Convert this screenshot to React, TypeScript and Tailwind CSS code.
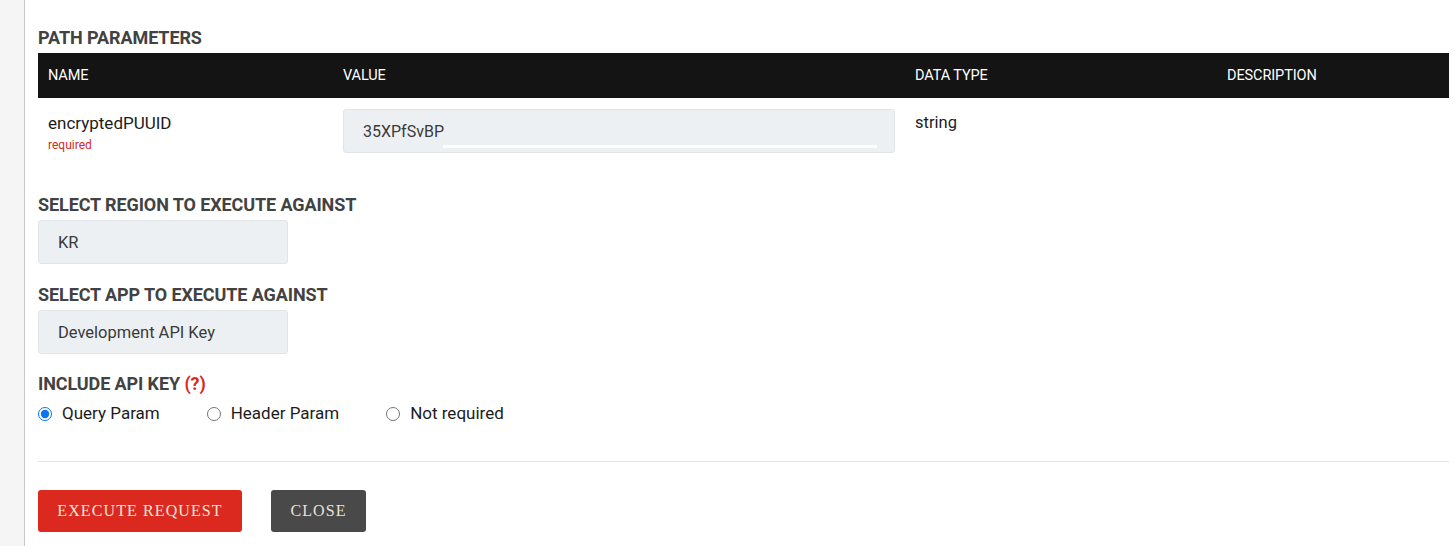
import { useState } from 'react';

const label = "text-[18px] leading-5 font-bold text-[#424242] uppercase tracking-[-0.1px] [font-family:'Roboto',sans-serif]";

function SelectBox({ value }: { value: string }) {
  return (
    <div className="w-[250px] h-[44px] bg-[#edf0f2] border border-[#e2e5e8] rounded-[3px] flex items-center pl-[19px] pt-[3px] text-[16.5px] text-[#3a3a3a]">
      {value}
    </div>
  );
}

export default function App() {
  const [keyMode, setKeyMode] = useState('query');

  const options = [
    { id: 'query', text: 'Query Param' },
    { id: 'header', text: 'Header Param' },
    { id: 'none', text: 'Not required' },
  ];

  return (
    <div className="flex w-[1456px] h-[546px] bg-white overflow-hidden [font-family:'Roboto',sans-serif]">
      {/* side strip */}
      <div className="w-[25px] shrink-0 bg-[#f5f5f5] border-r border-[#c8c8c8]" />

      <div className="w-[1411px] ml-[13px] pt-[28px]">
        <h3 className={label}>Path Parameters</h3>

        {/* parameters table */}
        <div className="mt-[5px]">
          <div className="grid grid-cols-[295px_572px_312px_232px] h-[45px] items-center bg-[#141414] text-white text-[14.5px] tracking-[-0.1px]">
            <div className="pl-[10px]">NAME</div>
            <div className="pl-[10px]">VALUE</div>
            <div className="pl-[10px]">DATA TYPE</div>
            <div className="pl-[10px]">DESCRIPTION</div>
          </div>
          <div className="grid grid-cols-[295px_572px_312px_232px] pt-[11px] h-[67px]">
            <div className="pl-[10px] pt-[4px]">
              <div className="text-[17px] leading-5 text-[#1c1c1c]">encryptedPUUID</div>
              <div className="text-[12px] leading-4 mt-[4px] text-[#d9281c]">required</div>
            </div>
            <div className="px-[10px]">
              <div className="relative h-[44px] bg-[#edf0f2] border border-[#e2e5e8] rounded-[3px] flex items-center pl-[19px] pt-[2px] text-[16px] text-[#3a3a3a]">
                35XPfSvBP
                <div className="absolute left-[99px] right-[17px] bottom-[4px] h-[3px] bg-white" />
              </div>
            </div>
            <div className="pl-[10px] pt-[4px] text-[16.5px] leading-5 text-[#1c1c1c]">string</div>
            <div />
          </div>
        </div>

        <h3 className={`${label} mt-[30px]`}>Select Region to Execute Against</h3>
        <div className="mt-[5px]">
          <SelectBox value="KR" />
        </div>

        <h3 className={`${label} mt-[21px]`}>Select App to Execute Against</h3>
        <div className="mt-[5px]">
          <SelectBox value="Development API Key" />
        </div>

        <h3 className={`${label} mt-[20px]`}>
          Include API Key <span className="text-[#d9281c]">(?)</span>
        </h3>
        <div className="flex items-center h-5 mt-[10px]">
          {options.map((o) => (
            <label key={o.id} className="flex items-center mr-[47px] text-[17px] text-[#1c1c1c] cursor-pointer">
              <input
                type="radio"
                name="apikey"
                checked={keyMode === o.id}
                onChange={() => setKeyMode(o.id)}
                className="m-0 w-[14px] h-[14px] accent-[#0b74ed]"
              />
              <span className="ml-[10px]">{o.text}</span>
            </label>
          ))}
        </div>

        <div className="mt-[37px] border-t border-[#e4e4e4]" />

        <div className="flex gap-[29px] mt-[28px] [font-family:'Liberation_Serif',serif]">
          <button className="w-[204px] h-[42px] rounded-[3px] bg-[#dc291f] text-[#f3e6d6] text-[16px] tracking-[1.1px] uppercase">
            Execute Request
          </button>
          <button className="w-[95px] h-[42px] rounded-[3px] bg-[#494949] text-[#e9e2d4] text-[16px] tracking-[1.1px] uppercase">
            Close
          </button>
        </div>
      </div>
    </div>
  );
}
